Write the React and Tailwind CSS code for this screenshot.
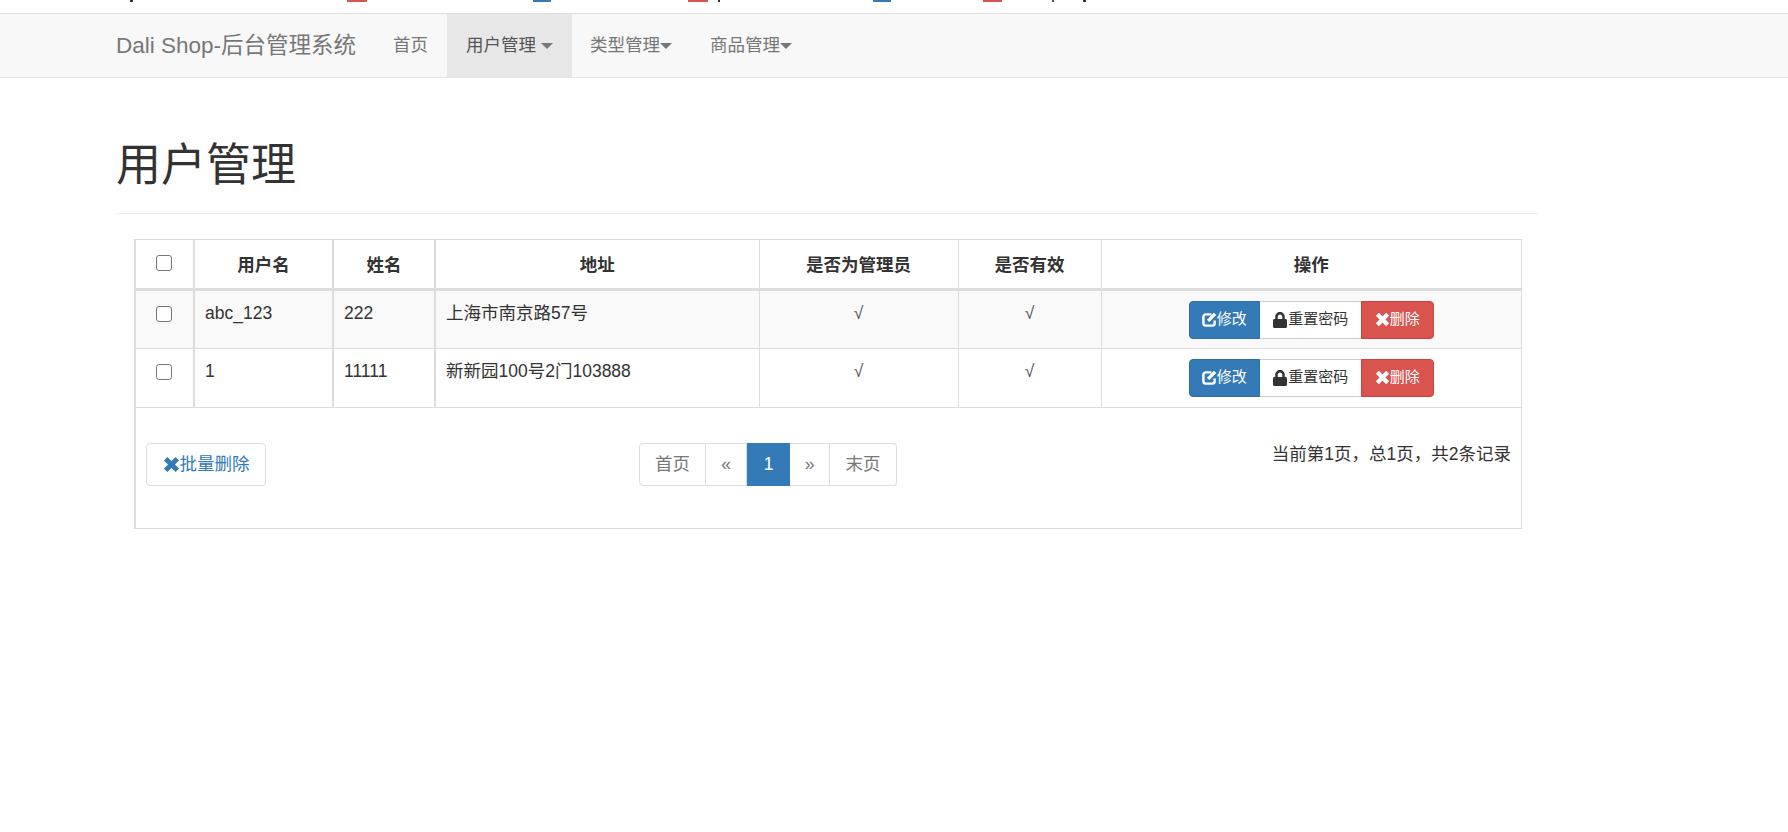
import { FaLock } from 'react-icons/fa'

const rows = [
  { name: 'abc_123', real: '222', addr: '上海市南京路57号', bg: 'bg-[#f9f9f9]' },
  { name: '1', real: '11111', addr: '新新园100号2门103888', bg: 'bg-white' },
]

const Caret = ({ className = '' }) => (
  <span className={`inline-block w-0 h-0 align-middle border-x-[6px] border-x-transparent border-t-[6px] border-t-[#777] ${className}`} />
)

const Box = () => <span className="block w-[16px] h-[16px] border border-[#767676] rounded-[3px] bg-white" />

const EditIcon = () => (
  <svg viewBox="0 0 16 16" className="w-[15px] h-[15px]" fill="none" stroke="currentColor">
    <path d="M10 2.500H4A2.500 2.500 0 0 0 1.500 5v7A2.500 2.500 0 0 0 4 14.500h7a2.500 2.500 0 0 0 2.500-2.500V9" strokeWidth="2.600" />
    <path d="M6.500 9.500 14 2" strokeWidth="3.600" />
  </svg>
)

const CrossIcon = ({ className = 'w-[15px] h-[15px]' }) => (
  <svg viewBox="0 0 16 16" className={className} fill="none" stroke="currentColor" strokeWidth="4.600">
    <path d="M2.500 2.500l11 11M13.500 2.500l-11 11" />
  </svg>
)

export default function App() {
  return (
    <div className="min-h-[832px] bg-white text-[17.5px] text-[#333] font-['Liberation_Sans','Noto_Sans_CJK_SC',sans-serif]">
      {/* bit of the page above that got cut off by the screenshot */}
      <div className="h-[14px] bg-white border-b border-[#e0e0e0]">
        <div className="flex h-[2px] pl-[130px]">
          <span className="w-[3px] bg-[#333]" />
          <span className="ml-[214px] w-[20px] bg-[#d9534f]" />
          <span className="ml-[166px] w-[18px] bg-[#337ab7]" />
          <span className="ml-[137px] w-[20px] bg-[#d9534f]" />
          <span className="ml-[10px] w-[2px] bg-[#333]" />
          <span className="ml-[153px] w-[18px] bg-[#337ab7]" />
          <span className="ml-[92px] w-[19px] bg-[#d9534f]" />
          <span className="ml-[50px] w-[2px] bg-[#555]" />
          <span className="ml-[29px] w-[3px] bg-[#333]" />
        </div>
      </div>

      <nav className="h-[64px] bg-[#f8f8f8] border-b border-[#e7e7e7] pl-[116px] flex items-stretch text-[#777]">
        <span className="text-[22.500px] flex items-center mr-[18px]">Dali Shop-后台管理系统</span>
        <a className="flex items-center px-[19px]">首页</a>
        <a className="flex items-center px-[19px] bg-[#e7e7e7] text-[#555]">用户管理<Caret className="ml-[5px]" /></a>
        <a className="flex items-center pl-[18px] pr-[19px]">类型管理<Caret /></a>
        <a className="flex items-center px-[19px]">商品管理<Caret /></a>
      </nav>

      <div className="pl-[116px] w-[1538px]">
        <div className="pt-[63px] pb-[22px] border-b border-[#eee]">
          <h1 className="text-[45px] leading-[50px] font-normal">用户管理</h1>
        </div>

        <div className="ml-[18px] mt-[25px] w-[1388px] h-[290px] border border-[#ddd] border-l-2">
          <table className="w-full table-fixed border-collapse">
            <colgroup>
              <col className="w-[58px]" />
              <col className="w-[139px]" />
              <col className="w-[102px]" />
              <col className="w-[324px]" />
              <col className="w-[199px]" />
              <col className="w-[143px]" />
              <col />
            </colgroup>
            <thead>
              <tr className="h-[49px] border-b-[3px] border-[#ddd] font-bold">
                <th className="border-r-2 border-[#ddd]"><div className="flex justify-center -mt-[2px] pr-[1px]"><Box /></div></th>
                <th className="border-r-2 border-[#ddd] pt-[3px]">用户名</th>
                <th className="border-r-2 border-[#ddd] pt-[3px]">姓名</th>
                <th className="border-r border-[#ddd] pt-[3px]">地址</th>
                <th className="border-r border-[#ddd] pt-[3px]">是否为管理员</th>
                <th className="border-r border-[#ddd] pt-[3px]">是否有效</th>
                <th className="pt-[3px]">操作</th>
              </tr>
            </thead>
            <tbody>
              {rows.map((r) => (
                <tr key={r.name} className={`h-[59px] ${r.bg} border-b border-[#ddd] align-top`}>
                  <td className="border-r-2 border-[#ddd] pt-[15px]"><div className="flex justify-center pr-[1px]"><Box /></div></td>
                  <td className="border-r-2 border-[#ddd] px-[10px] pt-[9px]">{r.name}</td>
                  <td className="border-r-2 border-[#ddd] px-[10px] pt-[9px]">{r.real}</td>
                  <td className="border-r border-[#ddd] px-[10px] pt-[9px]">{r.addr}</td>
                  <td className="border-r border-[#ddd] text-center pt-[9px] text-[#555]">√</td>
                  <td className="border-r border-[#ddd] text-center pt-[9px] text-[#555]">√</td>
                  <td className="pt-[10px]">
                    <div className="flex justify-center text-[15px] h-[38px]">
                      <button className="flex items-center w-[71px] justify-center bg-[#337ab7] border border-[#2e6da4] rounded-l-[4px] text-white"><EditIcon />修改</button>
                      <button className="flex items-center w-[101px] justify-center bg-white border-y border-[#ccc] text-[#333]"><FaLock className="w-[16px] h-[16px]" />重置密码</button>
                      <button className="flex items-center w-[73px] justify-center bg-[#d9534f] border border-[#d43f3a] rounded-r-[4px] text-white"><CrossIcon />删除</button>
                    </div>
                  </td>
                </tr>
              ))}
            </tbody>
          </table>

          <div className="flex items-start pl-[10px] pr-[10px] pt-[35px]">
            <button className="flex items-center justify-center w-[120px] h-[43px] bg-white border border-[#ddd] rounded-[4px] text-[#337ab7]"><CrossIcon className="w-[17px] h-[17px]" />批量删除</button>
            <div className="flex h-[43px] text-[#777] ml-[373px]">
              <a className="flex items-center justify-center w-[67px] border border-[#ddd] rounded-l-[4px]">首页</a>
              <a className="flex items-center justify-center w-[41px] border-y border-r border-[#ddd]">«</a>
              <a className="flex items-center justify-center w-[43px] bg-[#337ab7] text-white">1</a>
              <a className="flex items-center justify-center w-[40px] border-y border-r border-[#ddd]">»</a>
              <a className="flex items-center justify-center w-[67px] border-y border-r border-[#ddd] rounded-r-[4px]">末页</a>
            </div>
            <span className="ml-auto -mt-[1px] leading-[25px]">{'当前第1页\uFF0C总1页\uFF0C共2条记录'}</span>
          </div>
        </div>
      </div>
    </div>
  )
}
